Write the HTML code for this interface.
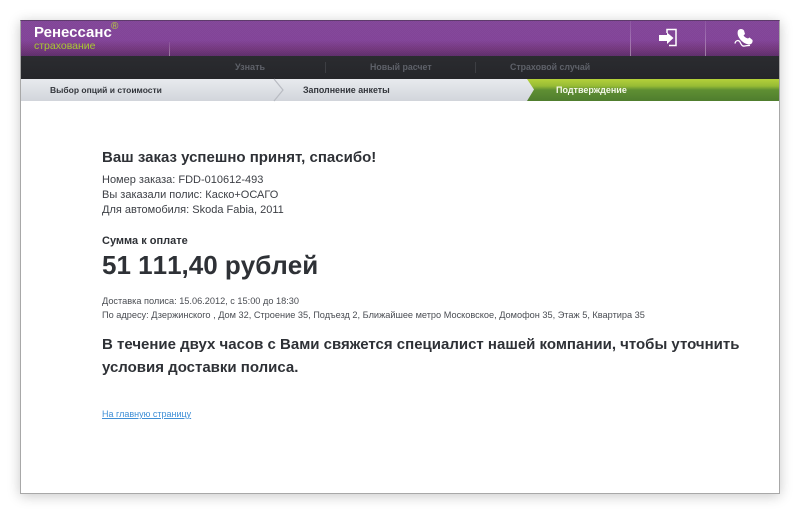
<!DOCTYPE html>
<html lang="ru"><head><meta charset="utf-8"><style>
html,body{margin:0;padding:0;width:800px;height:520px;overflow:hidden;background:#fff;font-family:"Liberation Sans",Arial,sans-serif}
.a{position:absolute;white-space:nowrap}
#win{position:absolute;left:20px;top:20px;width:758px;height:472px;border:1px solid #a8a8a8;border-top:1px solid #5d3a6b;background:#fff;box-shadow:0 2px 12px rgba(0,0,0,.22)}
#top{position:absolute;left:21px;top:21px;width:758px;height:35px;background:repeating-conic-gradient(rgba(0,0,0,.02) 0 25%,rgba(255,255,255,.01) 0 50%) 0 0/2px 2px,linear-gradient(#84479a 0,#84459a 55%,#74397f 80%,#5f2f6c 100%)}
#nav{position:absolute;left:21px;top:56px;width:758px;height:23px;background:linear-gradient(#2b2c30,#25262a)}
#steps{position:absolute;left:21px;top:79px;width:758px;height:22px;background:linear-gradient(#e8eaee,#d2d5db)}
.sep{position:absolute;width:1px;background:linear-gradient(rgba(255,255,255,.08),rgba(255,255,255,.38))}
.n{font-weight:bold;color:#5e6169;top:62px}
.s{font-weight:bold;color:#33363c;top:85px}
.t{font-size:11px;color:#3c3f45;left:102px}
.sm{font-size:9.2px;color:#4a4d53;left:102px}
.big{font-size:15px;font-weight:bold;color:#2e3136;left:102px}
</style></head><body>
<div id="win"></div>
<div id="top"></div>
<div id="nav"></div>
<div id="steps"></div>
<svg class="a" style="left:0;top:0" width="800" height="110" viewBox="0 0 800 110">
<defs><linearGradient id="g" x1="0" y1="79" x2="0" y2="101" gradientUnits="userSpaceOnUse">
<stop offset="0" stop-color="#b4d13a"/><stop offset=".32" stop-color="#97bb35"/><stop offset=".5" stop-color="#5f8f33"/><stop offset="1" stop-color="#4f7d2e"/></linearGradient></defs>
<path d="M527 79H779V101H527L534 89.500Z" fill="url(#g)"/>
<path d="M274 79L283 90L274 101" fill="none" stroke="#b8bbc2" stroke-width="1.2"/>
<path d="M659 35h8v-2.500l6.500 5.500-6.500 6v-3h-8z" fill="#fff"/>
<path d="M667 33V29.500h9V45.500h-7" fill="none" stroke="#fff" stroke-width="1.500"/>
<path d="M738 30.500c1.500-2 4.500-2 6 0l1 3.500-1.500 1.500c1 1.500 2.500 2.500 4.500 3l1.500-1 3 2.500c.5 2.500-1 4.500-3.500 4.500-3.500-.5-7-2.500-9-5.500-2-2.500-3-5.500-2-8.500z" fill="#fff"/>
<path d="M735 43.500c.5-3 3.500-4 5-1.500 1 2 1.500 3.500 3 4 2 .5 4.500-1 7-.5" fill="none" stroke="#fff" stroke-width="1.300"/>
</svg>
<div class="sep" style="left:169px;top:42px;height:14px"></div>
<div class="sep" style="left:630px;top:21px;height:35px"></div>
<div class="sep" style="left:705px;top:21px;height:35px"></div>
<div class="sep" style="left:325px;top:62px;height:11px;background:#3d3e43"></div>
<div class="sep" style="left:475px;top:62px;height:11px;background:#3d3e43"></div>
<div class="a" style="left:34px;top:24px;font-size:15px;font-weight:bold;color:#fff">Ренессанс</div>
<div class="a" style="left:111px;top:21px;font-size:10px;color:#b5cf3c">®</div>
<div class="a" style="left:34px;top:40px;font-size:10.5px;color:#a8c832">страхование</div>
<div class="a n" style="left:235px;font-size:9px">Узнать</div>
<div class="a n" style="left:370px;font-size:8.8px">Новый расчет</div>
<div class="a n" style="left:510px;font-size:8.8px">Страховой случай</div>
<div class="a s" style="left:50px;font-size:8.5px">Выбор опций и стоимости</div>
<div class="a s" style="left:303px;font-size:8.9px">Заполнение анкеты</div>
<div class="a s" style="left:556px;font-size:9px;color:#f4f7e8">Подтверждение</div>
<div class="a" style="left:102px;top:149px;font-size:15px;font-weight:bold;color:#2e3136">Ваш заказ успешно принят, спасибо!</div>
<div class="a t" style="top:174px">Номер заказа: FDD-010612-493</div>
<div class="a t" style="top:189px">Вы заказали полис: Каско+ОСАГО</div>
<div class="a t" style="top:204px">Для автомобиля: Skoda Fabia, 2011</div>
<div class="a" style="left:102px;top:235px;font-size:11px;font-weight:bold;color:#2e3136">Сумма к оплате</div>
<div class="a" style="left:102px;top:250px;font-size:26px;font-weight:bold;font-kerning:none;color:#2e3136">51 111,40 рублей</div>
<div class="a sm" style="top:296px">Доставка полиса: 15.06.2012, с 15:00 до 18:30</div>
<div class="a sm" style="top:310px">По адресу: Дзержинского , Дом 32, Строение 35, Подъезд 2, Ближайшее метро Московское, Домофон 35, Этаж 5, Квартира 35</div>
<div class="a big" style="top:336px">В течение двух часов с Вами свяжется специалист нашей компании, чтобы уточнить</div>
<div class="a big" style="top:359px">условия доставки полиса.</div>
<div class="a" style="left:102px;top:409px;font-size:9px;color:#3f8fd6;text-decoration:underline">На главную страницу</div>
</body></html>
